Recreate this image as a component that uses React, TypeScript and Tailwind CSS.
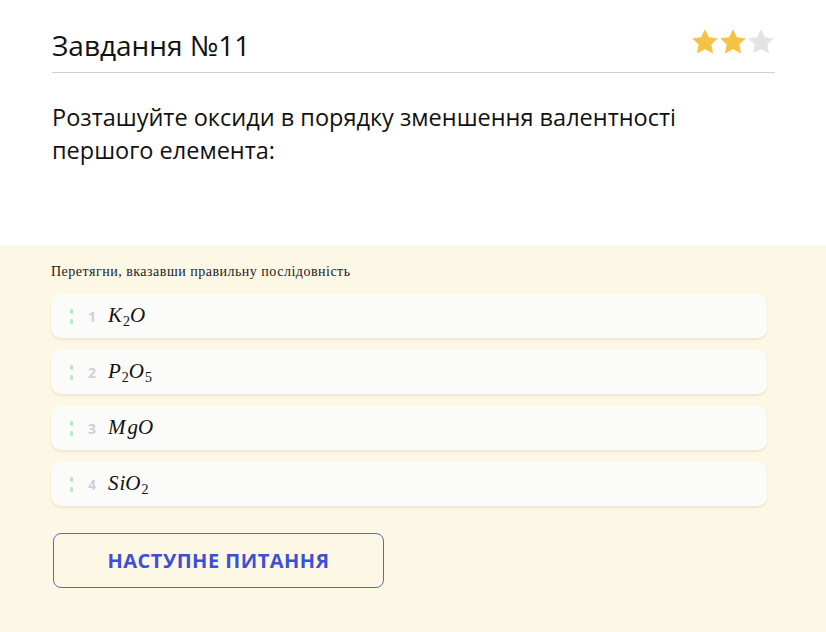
import React from "react";

const Star = ({ color }: { color: string }) => (
  <svg width="28" height="28" viewBox="0 0 24 24">
    <path
      d="M12 1.8l3.1 6.5 7.1.9-5.2 4.9 1.4 7.1L12 17.7l-6.4 3.5 1.4-7.1L1.8 9.2l7.1-.9z"
      fill={color}
      stroke={color}
      strokeWidth="0.8"
      strokeLinejoin="round"
    />
  </svg>
);

const Sub = ({ children }: { children: React.ReactNode }) => (
  <span className="text-[14px] not-italic ml-[1px]" style={{ verticalAlign: "-4px" }}>
    {children}
  </span>
);

const rows: { n: number; f: React.ReactNode }[] = [
  { n: 1, f: <>K<Sub>2</Sub>O</> },
  { n: 2, f: <>P<Sub>2</Sub>O<Sub>5</Sub></> },
  { n: 3, f: <>M<span className="ml-[2px]">g</span>O</> },
  { n: 4, f: <>S<span className="ml-[1px]">i</span>O<Sub>2</Sub></> },
];

export default function App() {
  return (
    <div className="w-[826px] h-[632px] bg-white flex flex-col" style={{ fontFamily: '"Open Sans", "Noto Sans", sans-serif' }}>
      <div className="px-[52px] pt-[26px]">
        <div className="flex items-center justify-between border-b border-[#cfcfcf] pb-[8px] mr-[-1px]">
          <div className="text-[28px] leading-[38px] text-[#111]">Завдання №11</div>
          <div className="flex gap-[0px] mr-[0px] mt-[-6px]">
            <Star color="#f6c244" />
            <Star color="#f6c244" />
            <Star color="#e3e3e3" />
          </div>
        </div>
        <div className="text-[23.5px] leading-[33px] text-[#111] mt-[28px] w-[680px]">
          Розташуйте оксиди в порядку зменшення валентності першого елемента:
        </div>
      </div>
      <div className="flex-1 mt-[78px] bg-[#fdf7e6] px-[51px] pt-[16px]">
        <div className="text-[14px] tracking-[0.5px] text-[#222] mb-[12px]" style={{ fontFamily: '"Liberation Serif", serif' }}>
          Перетягни, вказавши правильну послідовність
        </div>
        <div className="flex flex-col gap-[12px] w-[716px]">
          {rows.map((r) => (
            <div
              key={r.n}
              className="h-[44px] rounded-[10px] bg-[#fbfbfa] shadow-[0_2px_2px_rgba(200,180,120,0.25)] flex items-center pl-[19px]"
            >
              <div className="flex flex-col gap-[5px] mr-[15px]">
                <div className="w-[3px] h-[5px] bg-[#b4ecc7] rounded-[1px]" />
                <div className="w-[3px] h-[5px] bg-[#b4ecc7] rounded-[1px]" />
              </div>
              <div className="text-[14px] font-bold text-[#cfd2d6] w-[20px]">{r.n}</div>
              <div className="text-[21px] italic text-[#111]" style={{ fontFamily: '"Liberation Serif", "DejaVu Serif", serif' }}>
                {r.f}
              </div>
            </div>
          ))}
        </div>
        <button className="mt-[27px] ml-[2px] w-[331px] h-[55px] rounded-[8px] border border-[#5a66c9] text-[#3c4fd6] font-bold text-[20px] tracking-[0.5px] flex items-center justify-center">
          НАСТУПНЕ ПИТАННЯ
        </button>
      </div>
    </div>
  );
}
